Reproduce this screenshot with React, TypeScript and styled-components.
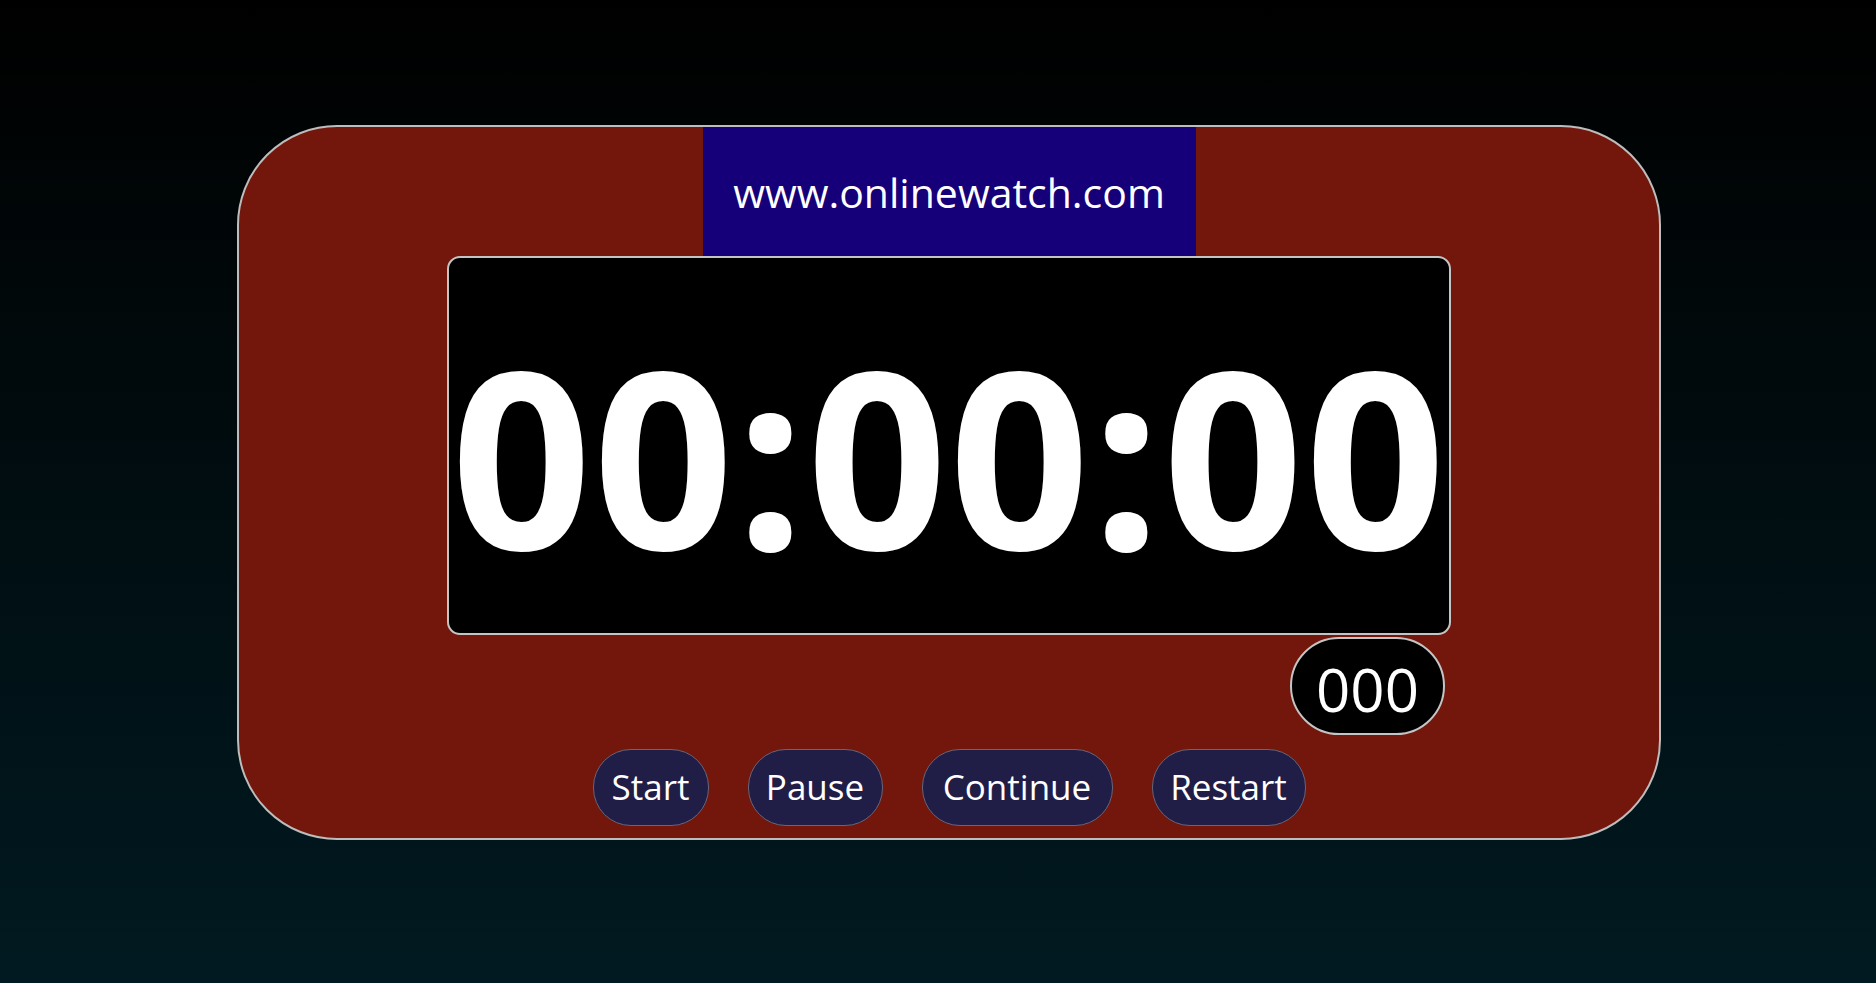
import React from 'react';
import styled, { createGlobalStyle } from 'styled-components';

const GlobalStyle = createGlobalStyle`
  html, body {
    margin: 0;
    padding: 0;
  }
  body {
    min-height: 100vh;
    background: linear-gradient(180deg, #000000 0%, #011a21 100%);
    font-family: "Open Sans", "Noto Sans", sans-serif;
    color: #ffffff;
  }
`;

const Page = styled.div`
  min-height: 100vh;
  box-sizing: border-box;
  padding: 125px 0 0 237px;
`;

const Watch = styled.div`
  box-sizing: border-box;
  width: 1424px;
  height: 715px;
  background: #73160b;
  border: 2px solid #bdbdbd;
  border-radius: 100px;
  display: flex;
  flex-direction: column;
  align-items: center;
`;

const Brand = styled.div`
  width: 493px;
  height: 129px;
  background: #16007a;
  display: flex;
  align-items: center;
  justify-content: center;
  font-size: 41px;
`;

const Screen = styled.div`
  box-sizing: border-box;
  width: 1004px;
  height: 379px;
  background: #000;
  border: 2px solid #c4c4c4;
  border-radius: 13px;
  display: flex;
  align-items: center;
  justify-content: center;
  padding-top: 18px;
`;

const Time = styled.div`
  font-size: 246px;
  font-weight: 700;
  line-height: 1;
  letter-spacing: 1.5px;
  white-space: nowrap;
`;

const MillisRow = styled.div`
  width: 1004px;
  display: flex;
  justify-content: flex-end;
  padding-right: 6px;
  box-sizing: border-box;
  margin-top: 2px;
`;

const Millis = styled.div`
  box-sizing: border-box;
  width: 155px;
  height: 98px;
  background: #000;
  border: 2px solid #c4c4c4;
  border-radius: 49px;
  display: flex;
  align-items: center;
  justify-content: center;
  font-size: 60px;
  line-height: 1;
  padding-top: 6px;
`;

const Controls = styled.div`
  display: flex;
  justify-content: center;
  gap: 39px;
  margin-top: 14px;
`;

const Button = styled.button<{ $w: number }>`
  box-sizing: border-box;
  width: ${p => p.$w}px;
  height: 77px;
  background: #201d47;
  border: 1px solid #66667a;
  border-radius: 38px;
  color: #fff;
  font-family: "Open Sans", "Noto Sans", sans-serif;
  font-size: 35px;
  padding: 0 0 3px;
  display: flex;
  align-items: center;
  justify-content: center;
  white-space: nowrap;
  cursor: pointer;
`;

const buttons = [
  { label: 'Start', w: 116 },
  { label: 'Pause', w: 135 },
  { label: 'Continue', w: 191 },
  { label: 'Restart', w: 154 },
];

const App = () => {
  return (
    <>
      <GlobalStyle />
      <Page>
        <Watch>
          <Brand>www.onlinewatch.com</Brand>
          <Screen>
            <Time>00:00:00</Time>
          </Screen>
          <MillisRow>
            <Millis>000</Millis>
          </MillisRow>
          <Controls>
            {buttons.map(b => (
              <Button key={b.label} $w={b.w}>
                {b.label}
              </Button>
            ))}
          </Controls>
        </Watch>
      </Page>
    </>
  );
};

export default App;
